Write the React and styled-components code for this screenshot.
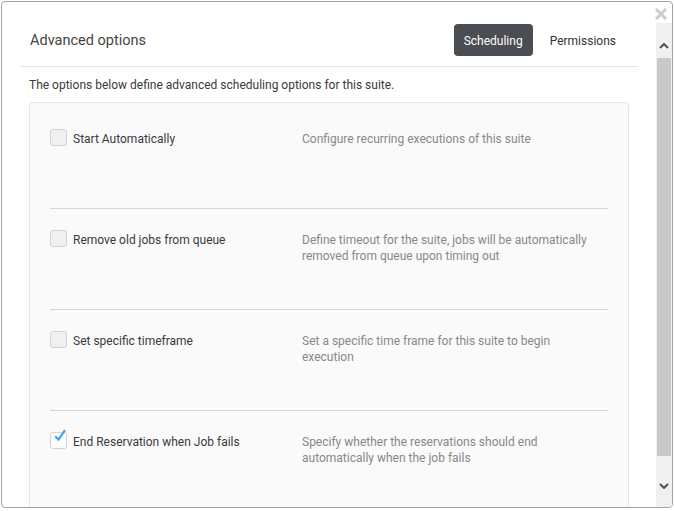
import React from 'react';
import styled, { createGlobalStyle } from 'styled-components';

const GlobalStyle = createGlobalStyle`
  html, body {
    margin: 0;
    padding: 0;
    background: #ffffff;
    font-family: Roboto, "Liberation Sans", Arial, sans-serif;
  }
`;

const Modal = styled.div`
  box-sizing: border-box;
  width: 672px;
  height: 507px;
  margin: 1px 0 0 1px;
  border: 1px solid #a3a3a3;
  border-radius: 4px;
  background: #fff;
  display: flex;
  flex-direction: column;
  overflow: hidden;
`;

const TopBar = styled.div`
  height: 21px;
  display: flex;
  justify-content: flex-end;
  align-items: flex-start;
  padding: 6px 5px 0 0;
  box-sizing: border-box;
`;

const CloseButton = styled.button`
  border: 0;
  background: none;
  padding: 0;
  width: 12px;
  height: 12px;
  cursor: pointer;
  display: flex;
`;

const Body = styled.div`
  flex: 1;
  display: flex;
  min-height: 0;
`;

const Content = styled.div`
  flex: 1;
  overflow: hidden;
`;

const Header = styled.div`
  margin: 0 18px;
  padding: 1px 12px 10px 10px;
  display: flex;
  align-items: center;
  border-bottom: 1px solid #e6e6e6;
`;

const Title = styled.h2`
  flex: 1;
  margin: 0;
  font-size: 14.5px;
  font-weight: 400;
  color: #444;
`;

const Tab = styled.button`
  height: 32px;
  padding: 1px 10px 0;
  border: 0;
  border-radius: 4px;
  font-family: inherit;
  font-size: 12px;
  color: ${(p) => (p.$active ? '#fff' : '#333')};
  background: ${(p) => (p.$active ? '#4a4d52' : 'transparent')};
  margin-left: ${(p) => (p.$active ? '0' : '7px')};
`;

const Section = styled.div`
  padding: 0 27px;
`;

const Intro = styled.p`
  margin: 10px 0 9px;
  font-size: 12px;
  line-height: 16px;
  color: #3a3a3a;
`;

const Panel = styled.div`
  border: 1px solid #e4e4e4;
  border-radius: 4px;
  background: #fafafa;
  padding: 5px 20px 0;
`;

const OptionRow = styled.div`
  box-sizing: border-box;
  height: 101px;
  padding-top: 23px;
  display: flex;
  align-items: flex-start;
  border-bottom: 1px solid #d6d6d6;
`;

const OptionLabel = styled.label`
  flex: 0 0 252px;
  display: flex;
  align-items: flex-start;
  gap: 6px;
  font-size: 12px;
  line-height: 16px;
  color: #3a3a3a;
`;

const Box = styled.span`
  box-sizing: border-box;
  position: relative;
  flex: 0 0 17px;
  width: 17px;
  height: 17px;
  margin-top: -2px;
  border: 1px solid #d2d2d2;
  border-radius: 3px;
  background: ${(p) => (p.$checked ? '#fff' : '#f0f0f0')};
`;

const Tick = styled.svg`
  position: absolute;
  left: 3px;
  top: -4px;
`;

const OptionText = styled.p`
  margin: 0;
  width: 296px;
  font-size: 12px;
  line-height: 16px;
  color: #888;
`;

const ScrollBar = styled.div`
  flex: 0 0 16px;
  display: flex;
  flex-direction: column;
  background: #f0f0f0;
`;

const ScrollButton = styled.div`
  height: 35px;
  display: flex;
  justify-content: center;
  align-items: ${(p) => (p.$down ? 'flex-start' : 'flex-end')};
  padding: ${(p) => (p.$down ? '11px 0 0' : '0 0 9px')};
  box-sizing: border-box;
`;

const Track = styled.div`
  flex: 1;
  padding: 0 1px;
`;

const Thumb = styled.div`
  height: 398px;
  background: #c8c8c8;
`;

const options = [
  { label: 'Start Automatically', text: 'Configure recurring executions of this suite' },
  {
    label: 'Remove old jobs from queue',
    text: 'Define timeout for the suite, jobs will be automatically removed from queue upon timing out',
  },
  { label: 'Set specific timeframe', text: 'Set a specific time frame for this suite to begin execution' },
  {
    label: 'End Reservation when Job fails',
    text: 'Specify whether the reservations should end automatically when the job fails',
    checked: true,
  },
];

const Chevron = ({ down }) => (
  <svg width="10" height="6" viewBox="0 0 10 6">
    <path
      d={down ? 'M1 1 L5 5 L9 1' : 'M1 5 L5 1 L9 5'}
      fill="none"
      stroke="#505050"
      strokeWidth="2"
    />
  </svg>
);

const App = () => (
  <>
    <GlobalStyle />
    <Modal>
      <TopBar>
        <CloseButton aria-label="Close">
          <svg width="12" height="12" viewBox="0 0 12 12">
            <path d="M2 2 L10 10 M10 2 L2 10" stroke="#cccccc" strokeWidth="3" strokeLinecap="square" />
          </svg>
        </CloseButton>
      </TopBar>
      <Body>
        <Content>
          <Header>
            <Title>Advanced options</Title>
            <Tab $active>Scheduling</Tab>
            <Tab>Permissions</Tab>
          </Header>
          <Section>
            <Intro>The options below define advanced scheduling options for this suite.</Intro>
            <Panel>
              {options.map((o) => (
                <OptionRow key={o.label}>
                  <OptionLabel>
                    <Box $checked={o.checked}>
                      {o.checked && (
                        <Tick width="12" height="13" viewBox="0 0 12 13">
                          <path d="M1.2 7.2 L4.6 10.6 L11 1.2" fill="none" stroke="#3ea6ee" strokeWidth="2.2" />
                        </Tick>
                      )}
                    </Box>
                    {o.label}
                  </OptionLabel>
                  <OptionText>{o.text}</OptionText>
                </OptionRow>
              ))}
            </Panel>
          </Section>
        </Content>
        <ScrollBar>
          <ScrollButton>
            <Chevron />
          </ScrollButton>
          <Track>
            <Thumb />
          </Track>
          <ScrollButton $down>
            <Chevron down />
          </ScrollButton>
        </ScrollBar>
      </Body>
    </Modal>
  </>
);

export default App;
